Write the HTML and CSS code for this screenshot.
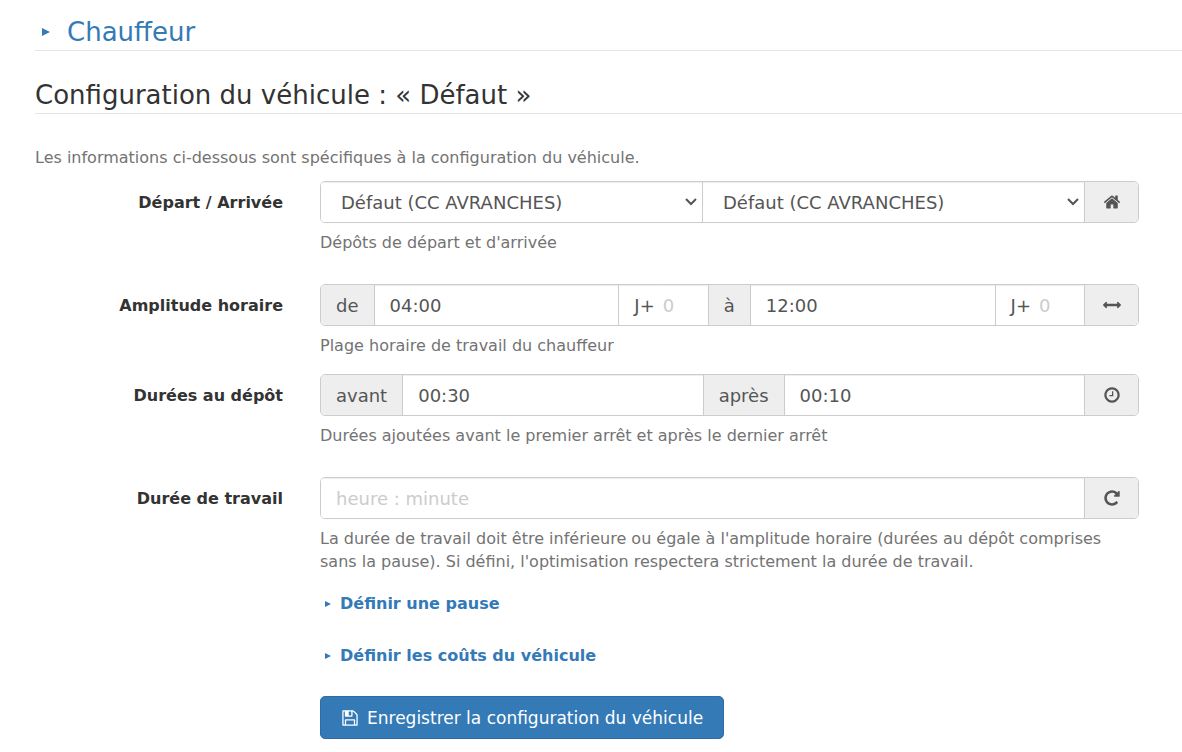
FILE: index.html
```
<!DOCTYPE html>
<html lang="fr">
<head>
    <meta charset="UTF-8">
    <meta name="viewport" content="width=device-width, initial-scale=1.0">
    <title>Configuration du véhicule</title>
    <link rel="stylesheet" href="styles.css">
</head>
<body>
    <main>
        <!-- Chauffeur -->
        <h2 class="section-title"><a href="#chauffeur"><svg class="caret" viewBox="0 0 8 8"><path d="M0 0L8 4L0 8z"/></svg>Chauffeur</a></h2>

        <!-- Configuration -->
        <h2 class="section-title">Configuration du véhicule : « Défaut »</h2>

        <form class="vehicle-form">
            <p class="help intro">Les informations ci-dessous sont spécifiques à la configuration du véhicule.</p>

            <div class="row">
                <label class="row-label" for="storeStart">Départ / Arrivée</label>
                <div class="field">
                    <div class="input-group">
                        <select id="storeStart" class="control">
                            <option>Défaut (CC AVRANCHES)</option>
                        </select>
                        <select id="storeStop" class="control" aria-label="Arrivée">
                            <option>Défaut (CC AVRANCHES)</option>
                        </select>
                        <span class="addon addon-icon"><svg class="icon" viewBox="0 0 1792 1792"><path d="M1472 992v480q0 26-19 45t-45 19h-384v-384h-256v384h-384q-26 0-45-19t-19-45v-480q0-1 .5-3t.5-3l575-474 575 474q1 2 1 6zm223-69l-62 74q-8 9-21 11h-3q-13 0-21-7l-692-577-692 577q-12 8-24 7-13-2-21-11l-62-74q-8-10-7-23.5t11-21.5l719-599q32-26 76-26t76 26l244 204v-195q0-14 9-23t23-9h192q14 0 23 9t9 23v408l219 182q10 8 11 21.5t-7 23.5z"/></svg></span>
                    </div>
                    <p class="help">Dépôts de départ et d'arrivée</p>
                </div>
            </div>

            <div class="row row-tight">
                <label class="row-label" for="timeStart">Amplitude horaire</label>
                <div class="field">
                    <div class="input-group">
                        <label class="addon" for="timeStart">de</label>
                        <input type="text" id="timeStart" class="control" value="04:00">
                        <label class="addon addon-day" for="dayStart">J+</label>
                        <input type="text" id="dayStart" class="control control-day" placeholder="0">
                        <label class="addon" for="timeEnd">à</label>
                        <input type="text" id="timeEnd" class="control" value="12:00">
                        <label class="addon addon-day" for="dayEnd">J+</label>
                        <input type="text" id="dayEnd" class="control control-day" placeholder="0">
                        <span class="addon addon-icon"><svg class="icon" viewBox="0 0 1792 1792"><path d="M1792 896q0 26-19 45l-256 256q-19 19-45 19t-45-19-19-45v-128h-1024v128q0 26-19 45t-45 19-45-19l-256-256q-19-19-19-45t19-45l256-256q19-19 45-19t45 19 19 45v128h1024v-128q0-26 19-45t45-19 45 19l256 256q19 19 19 45z"/></svg></span>
                    </div>
                    <p class="help">Plage horaire de travail du chauffeur</p>
                </div>
            </div>

            <div class="row">
                <label class="row-label" for="serviceStart">Durées au dépôt</label>
                <div class="field">
                    <div class="input-group">
                        <label class="addon" for="serviceStart">avant</label>
                        <input type="text" id="serviceStart" class="control" value="00:30">
                        <label class="addon" for="serviceEnd">après</label>
                        <input type="text" id="serviceEnd" class="control" value="00:10">
                        <span class="addon addon-icon"><svg class="icon" viewBox="0 0 1792 1792"><path d="M1024 544v448q0 14-9 23t-23 9h-320q-14 0-23-9t-9-23v-64q0-14 9-23t23-9h224v-352q0-14 9-23t23-9h64q14 0 23 9t9 23zm416 352q0-148-73-273t-198-198-273-73-273 73-198 198-73 273 73 273 198 198 273 73 273-73 198-198 73-273zm224 0q0 209-103 385.5t-279.5 279.5-385.5 103-385.5-103-279.5-279.5-103-385.5 103-385.5 279.5-279.5 385.5-103 385.5 103 279.5 279.5 103 385.5z"/></svg></span>
                    </div>
                    <p class="help">Durées ajoutées avant le premier arrêt et après le dernier arrêt</p>
                </div>
            </div>

            <div class="row">
                <label class="row-label" for="workTime">Durée de travail</label>
                <div class="field">
                    <div class="input-group">
                        <input type="text" id="workTime" class="control" placeholder="heure : minute">
                        <span class="addon addon-icon"><svg class="icon" viewBox="0 0 1792 1792"><path d="M1664 256v448q0 26-19 45t-45 19h-448q-42 0-59-40-17-39 14-69l138-138q-148-137-349-137-104 0-198.5 40.5t-163.5 109.5-109.5 163.5-40.5 198.5 40.5 198.5 109.5 163.5 163.5 109.5 198.5 40.5q119 0 225-52t179-147q7-10 23-12 15 0 25 9l137 138q9 8 9.5 20.5t-7.5 22.5q-109 132-264 204.5t-327 72.5q-156 0-298-61t-245-164-164-245-61-298 61-298 164-245 245-164 298-61q147 0 284.5 55.5t244.5 156.5l130-129q29-31 70-14 39 17 39 59z"/></svg></span>
                    </div>
                    <p class="help">La durée de travail doit être inférieure ou égale à l'amplitude horaire (durées au dépôt comprises sans la pause). Si défini, l'optimisation respectera strictement la durée de travail.</p>
                </div>
            </div>

            <div class="actions">
                <a class="toggle" href="#pause"><svg class="caret" viewBox="0 0 8 8"><path d="M0 0L8 4L0 8z"/></svg>Définir une pause</a>
                <a class="toggle" href="#couts"><svg class="caret" viewBox="0 0 8 8"><path d="M0 0L8 4L0 8z"/></svg>Définir les coûts du véhicule</a>
                <button type="submit" class="btn"><svg class="icon" viewBox="0 0 1792 1792"><path d="M512 1536h768v-384h-768v384zm896 0h128v-896q0-14-10-38.5t-20-34.5l-281-281q-10-10-34-20t-39-10v416q0 40-28 68t-68 28h-576q-40 0-68-28t-28-68v-416h-128v1280h128v-416q0-40 28-68t68-28h832q40 0 68 28t28 68v416zm-384-928v-320q0-13-9.5-22.5t-22.5-9.5h-192q-13 0-22.5 9.5t-9.5 22.5v320q0 13 9.5 22.5t22.5 9.5h192q13 0 22.5-9.5t9.5-22.5zm640 32v928q0 40-28 68t-68 28h-1344q-40 0-68-28t-28-68v-1344q0-40 28-68t68-28h928q40 0 88 20t76 48l280 280q28 28 48 76t20 88z"/></svg>Enregistrer la configuration du véhicule</button>
            </div>
        </form>
    </main>
</body>
</html>
```

FILE: styles.css
```
* {
    box-sizing: border-box;
}
body {
    margin: 0;
    font-family: Verdana, "DejaVu Sans", sans-serif;
    font-size: 16px;
    line-height: 23px;
    color: #333;
    background-color: #fff;
}
main {
    padding: 14px 0 12px 35px;
}
a {
    color: #337ab7;
    text-decoration: none;
}
p {
    margin: 0;
}
.section-title {
    margin: 0 0 26px;
    font-size: 26px;
    font-weight: normal;
    line-height: 36px;
    border-bottom: 1px solid #e5e5e5;
}
.section-title a {
    display: flex;
    align-items: center;
}
.section-title .caret {
    width: 8px;
    height: 8px;
    margin: 0 17px 0 7px;
}
.caret {
    fill: currentColor;
}
.help {
    color: #737373;
}
.intro {
    margin: 32px 0 12px;
}
.vehicle-form {
    padding-right: 43px;
}

/* Lignes du formulaire */
.row {
    display: grid;
    grid-template-columns: 248px 1fr;
    column-gap: 37px;
    margin-bottom: 30px;
}
.row-tight {
    margin-bottom: 17px;
}
.row-label {
    padding-top: 10px;
    font-weight: bold;
    text-align: right;
}
.field {
    min-width: 0;
}
.field .help {
    margin-top: 8px;
}
.input-group {
    display: flex;
    height: 42px;
    border: 1px solid #ccc;
    border-radius: 5px;
    overflow: hidden;
}
.control {
    flex: 1 1 0;
    min-width: 0;
    padding: 0 15px;
    border: 0;
    border-left: 1px solid #ccc;
    background-color: #fff;
    box-shadow: inset 0 1px 1px rgba(0, 0, 0, 0.075);
    color: #555;
    font-family: inherit;
    font-size: 18px;
}
select.control {
    appearance: none;
    padding: 0 20px;
    background-image: url("data:image/svg+xml,%3Csvg xmlns='http://www.w3.org/2000/svg' width='12' height='8'%3E%3Cpath d='M1 1l5 5 5-5' fill='none' stroke='%23555' stroke-width='2'/%3E%3C/svg%3E");
    background-repeat: no-repeat;
    background-position: right 5px center;
}
.control::placeholder {
    color: #ccc;
}
.addon {
    display: flex;
    align-items: center;
    padding: 0 15px;
    border-left: 1px solid #ccc;
    background-color: #eee;
    color: #555;
    font-size: 18px;
}
.input-group > :first-child {
    border-left: 0;
}
.addon-day {
    padding-right: 3px;
    background-color: #fff;
    box-shadow: inset 0 1px 1px rgba(0, 0, 0, 0.075);
}
.control-day {
    flex: 0 0 50px;
    padding: 0 5px;
    border-left: 0;
}
.addon-icon {
    flex: 0 0 54px;
    justify-content: center;
}
.icon {
    width: 18px;
    height: 18px;
    fill: currentColor;
}

/* Liens et bouton */
.actions {
    display: flex;
    flex-direction: column;
    align-items: flex-start;
    gap: 29px;
    margin: -11px 0 0 285px;
}
.toggle {
    display: flex;
    align-items: center;
    font-weight: bold;
}
.toggle .caret {
    width: 6px;
    height: 6px;
    margin: 0 9px 0 5px;
}
.btn {
    display: flex;
    align-items: center;
    gap: 8px;
    height: 43px;
    padding: 0 20px;
    border: 1px solid #2e6da4;
    border-radius: 5px;
    background-color: #337ab7;
    color: #fff;
    font-family: inherit;
    font-size: 17px;
}
```
